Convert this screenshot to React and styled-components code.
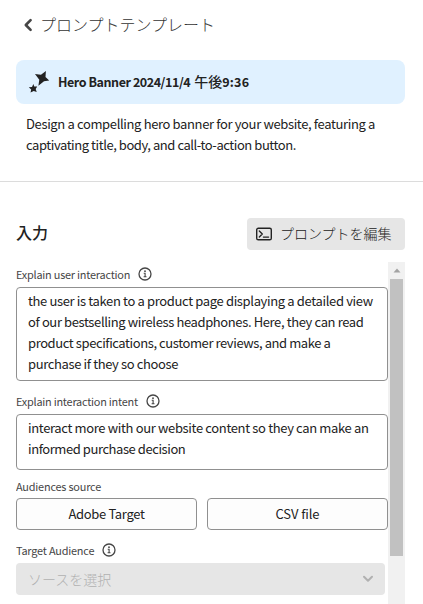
import React from "react";
import styled, { createGlobalStyle } from "styled-components";

const GlobalStyle = createGlobalStyle`
  * { box-sizing: border-box; }
  body { margin: 0; background: #fff; overflow: hidden; }
`;

const Panel = styled.main`
  display: flex;
  flex-direction: column;
  width: 423px;
  height: 604px;
  overflow: hidden;
  background: #fff;
  color: #222;
  font-family: "Noto Sans CJK JP", "Noto Sans", sans-serif;
  font-size: 13px;
  line-height: 21px;
`;

const Line = styled.span`
  display: block;
  white-space: nowrap;
  letter-spacing: ${({ $track = 0 }) => $track}px;
`;

const Header = styled.header`
  display: flex;
  align-items: center;
  gap: 6px;
  height: 60px;
  padding: 0 0 11px 23px;
  flex: none;
`;

const HeaderTitle = styled.h1`
  margin: 0;
  font-size: 16px;
  font-weight: 300;
  color: #333;
  white-space: nowrap;
`;

const Banner = styled.section`
  display: flex;
  align-items: center;
  gap: 8px;
  height: 44px;
  margin: 0 18px 0 16px;
  padding-left: 12px;
  border-radius: 8px;
  background: #e0f1ff;
  font-size: 12.5px;
  font-weight: 700;
  flex: none;
`;

const BannerTitle = styled.div`
  display: flex;
  align-items: baseline;
  padding-bottom: 1px;
  white-space: nowrap;
`;

const Meridiem = styled.span`
  margin-left: 4px;
  font-size: 14px;
  font-weight: 500;
`;

const Description = styled.div`
  height: 78px;
  padding: 9px 0 0 26px;
  border-bottom: 1px solid #dcdcdc;
  flex: none;
`;

const SectionHead = styled.div`
  display: flex;
  align-items: center;
  justify-content: space-between;
  height: 80px;
  padding: 24px 18px 0 16px;
  flex: none;
`;

const SectionTitle = styled.h2`
  margin: 0;
  padding-bottom: 5px;
  font-size: 16px;
  line-height: 24px;
  font-weight: 500;
`;

const EditButton = styled.button`
  display: flex;
  align-items: center;
  gap: 7px;
  width: 158px;
  height: 32px;
  margin: 0;
  padding: 0 0 0 8px;
  border: 0;
  border-radius: 4px;
  background: #e6e6e6;
  color: #222;
  font: 300 14px/21px "Noto Sans CJK JP", sans-serif;
`;

const EditLabel = styled.span`
  padding-bottom: 2px;
  white-space: nowrap;
`;

const ScrollArea = styled.div`
  display: flex;
  flex: 1;
  min-height: 0;
  padding-left: 16px;
`;

const Form = styled.div`
  width: 372px;
  overflow: hidden;
`;

const Label = styled.div`
  display: flex;
  align-items: center;
  gap: 8px;
  height: ${({ $height }) => $height}px;
  padding-top: ${({ $top = 0 }) => $top}px;
  padding-bottom: ${({ $bottom = 0 }) => $bottom}px;
  font-size: 10.9px;
  line-height: 16px;
  color: #464646;
`;

const TextBox = styled.div`
  height: ${({ $height }) => $height}px;
  padding: 2px 11px;
  border: 1px solid #909090;
  border-radius: 4px;
  background: #fff;
`;

const Choices = styled.div`
  display: grid;
  grid-template-columns: 1fr 1fr;
  gap: 10px;
`;

const Choice = styled.button`
  display: flex;
  align-items: center;
  justify-content: center;
  height: 32px;
  padding: 0 0 1px;
  border: 1px solid #909090;
  border-radius: 4px;
  background: #fdfdfd;
  color: #222;
  font: 400 13px/21px "Noto Sans CJK JP", sans-serif;
`;

const Select = styled.div`
  display: flex;
  align-items: center;
  justify-content: space-between;
  width: 369px;
  height: 32px;
  padding: 0 11px 0 12px;
  border-radius: 4px;
  background: #e6e6e6;
  color: #b1b1b1;
  font-size: 14px;
  font-weight: 300;
`;

const ScrollTrack = styled.div`
  display: flex;
  flex-direction: column;
  align-items: center;
  width: 17px;
  background: #f1f1f1;
`;

const ArrowCell = styled.div`
  display: grid;
  place-items: center;
  width: 17px;
  height: 17px;
`;

const Thumb = styled.div`
  width: 13px;
  height: 277px;
  background: #c1c1c1;
`;

const Icon = styled.svg`
  display: block;
  flex: none;
`;

const InfoIcon = () => (
  <Icon width="14" height="14" viewBox="0 0 14 14">
    <circle cx="7" cy="7" r="6" fill="none" stroke="#464646" strokeWidth="1.3" />
    <circle cx="7" cy="4.2" r="0.9" fill="#464646" />
    <path d="M5.7 6.3H7.1V9.7M5.6 9.8H8.5" fill="none" stroke="#464646" strokeWidth="1.1" />
  </Icon>
);

const BackIcon = () => (
  <Icon width="11" height="14" viewBox="0 0 11 14">
    <path d="M7.6 2.1L2.8 7L7.6 11.9" fill="none" stroke="#464646" strokeWidth="2.6" strokeLinecap="round" strokeLinejoin="round" />
  </Icon>
);

const SparkleIcon = () => (
  <Icon width="22" height="24" viewBox="0 0 22 24">
    <path d="M17.9 1L17.5 6.9L21.2 10.6L16 11.3L10.4 15.7L11.3 9.7L7 4.1L13 4.8Z" fill="#222" />
    <path d="M5.4 14L6.2 16.5L9.2 16.5L7.7 19L8.7 22L5.7 20.9L2.5 22.5L3.2 19.5L0.8 17.3L4 17Z" fill="#222" />
  </Icon>
);

const PromptIcon = () => (
  <Icon width="18" height="14" viewBox="0 0 18 14">
    <rect x="1.7" y="1.2" width="14.6" height="11.6" rx="1.6" fill="none" stroke="#222" strokeWidth="1.4" />
    <path d="M4.3 4L7.3 7L4.3 10M8.4 10.1H13.6" fill="none" stroke="#222" strokeWidth="1.3" strokeLinecap="round" strokeLinejoin="round" />
  </Icon>
);

const ChevronIcon = () => (
  <Icon width="12" height="8" viewBox="0 0 12 8">
    <path d="M2 1.8L6 5.8L10 1.8" fill="none" stroke="#b1b1b1" strokeWidth="2" strokeLinecap="round" strokeLinejoin="round" />
  </Icon>
);

export default function App() {
  return (
    <Panel>
      <GlobalStyle />
      <Header>
        <BackIcon />
        <HeaderTitle>プロンプトテンプレート</HeaderTitle>
      </Header>
      <Banner>
        <SparkleIcon />
        <BannerTitle>
          <Line $track={-0.44}>Hero Banner 2024/11/4</Line>
          <Meridiem>午後</Meridiem>
          <Line $track={0.2}>9:36</Line>
        </BannerTitle>
      </Banner>
      <Description>
        <Line $track={-0.36}>Design a compelling hero banner for your website, featuring a</Line>
        <Line $track={-0.44}>captivating title, body, and call-to-action button.</Line>
      </Description>
      <SectionHead>
        <SectionTitle>入力</SectionTitle>
        <EditButton>
          <PromptIcon />
          <EditLabel>プロンプトを編集</EditLabel>
        </EditButton>
      </SectionHead>
      <ScrollArea>
        <Form>
          <Label $height={25} $bottom={2}>
            <Line $track={-0.22}>Explain user interaction</Line>
            <InfoIcon />
          </Label>
          <TextBox $height={94}>
            <Line $track={-0.355}>the user is taken to a product page displaying a detailed view</Line>
            <Line $track={-0.38}>of our bestselling wireless headphones. Here, they can read</Line>
            <Line $track={-0.41}>product specifications, customer reviews, and make a</Line>
            <Line $track={-0.37}>purchase if they so choose</Line>
          </TextBox>
          <Label $height={33} $top={7}>
            <Line $track={-0.23}>Explain interaction intent</Line>
            <InfoIcon />
          </Label>
          <TextBox $height={56}>
            <Line $track={-0.35}>interact more with our website content so they can make an</Line>
            <Line $track={-0.43}>informed purchase decision</Line>
          </TextBox>
          <Label $height={28} $top={4}>
            <Line $track={-0.2}>Audiences source</Line>
          </Label>
          <Choices>
            <Choice><Line $track={-0.33}>Adobe Target</Line></Choice>
            <Choice><Line $track={-0.1}>CSV file</Line></Choice>
          </Choices>
          <Label $height={33} $top={7}>
            <Line $track={-0.2}>Target Audience</Line>
            <InfoIcon />
          </Label>
          <Select>
            <Line>ソースを選択</Line>
            <ChevronIcon />
          </Select>
        </Form>
        <ScrollTrack>
          <ArrowCell>
            <Icon width="8" height="5" viewBox="0 0 8 5">
              <path d="M0.5 4.5L4 0.5L7.5 4.5Z" fill="#a3a3a3" />
            </Icon>
          </ArrowCell>
          <Thumb />
        </ScrollTrack>
      </ScrollArea>
    </Panel>
  );
}
